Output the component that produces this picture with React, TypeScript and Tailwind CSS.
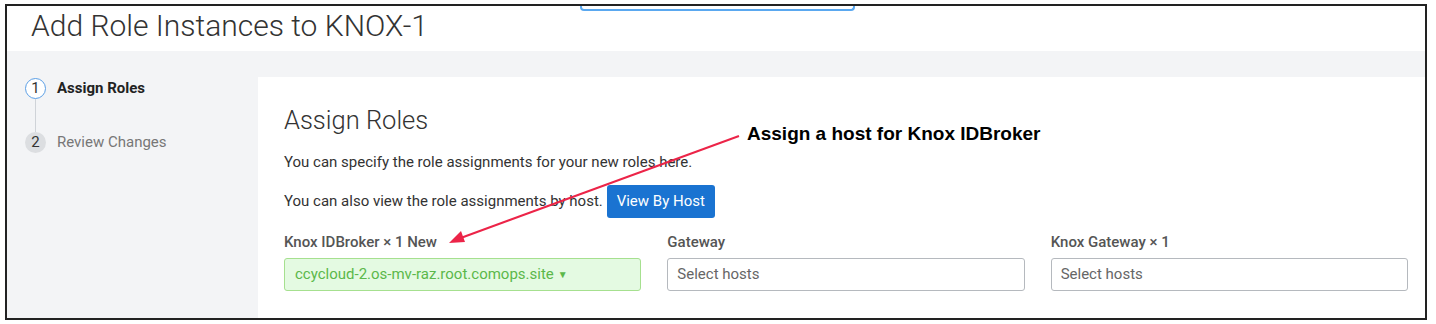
const fieldCols = [
  { label: "Knox IDBroker × 1 New", value: "ccycloud-2.os-mv-raz.root.comops.site", assigned: true },
  { label: "Gateway", value: "Select hosts", assigned: false },
  { label: "Knox Gateway × 1", value: "Select hosts", assigned: false },
];

const Stepper = () => (
  <div className="w-[251px] shrink-0 pl-[18px] pt-[27px]">
    <div className="flex items-center gap-[11px] h-[21px]">
      <div className="w-[21px] h-[21px] rounded-full border-[1.5px] border-[#5b9fe6] bg-white flex items-center justify-center text-[15px] text-[#333]">
        1
      </div>
      <span className="text-[15px] font-bold text-[#222]">Assign Roles</span>
    </div>
    <div className="ml-[10px] w-px h-[33px] bg-[#cfd3d8]" />
    <div className="flex items-center gap-[11px] h-[21px]">
      <div className="w-[21px] h-[21px] rounded-full bg-[#dcdee1] flex items-center justify-center text-[15px] text-[#333]">
        2
      </div>
      <span className="text-[15px] text-[#777]">Review Changes</span>
    </div>
  </div>
);

const HostField = ({ label, value, assigned }: { label: string; value: string; assigned: boolean }) => (
  <div className="flex flex-col">
    <label className="text-[15px] font-medium text-[#555] leading-[20px] mb-[6px]">{label}</label>
    {assigned ? (
      <div className="h-[33px] rounded-[3px] border border-[#a6e08f] bg-[#e4fae2] px-[10px] flex items-center text-[15px] text-[#5bb84a]">
        {value}
        <span className="ml-[4px] text-[10px] leading-none">▼</span>
      </div>
    ) : (
      <div className="h-[33px] rounded-[3px] border border-[#b5b9be] bg-white px-[9px] flex items-center text-[15px] text-[#666]">
        {value}
      </div>
    )}
  </div>
);

export default function App() {
  return (
    <div className="relative w-[1436px] h-[324px] bg-white overflow-hidden font-['Roboto',sans-serif]">
      <div className="absolute left-[5px] top-[4px] w-[1422px] h-[316px] border-2 border-[#222] flex flex-col">
        {/* partial input cut off at the top */}
        <div className="absolute left-[573px] top-0 w-[275px] h-[5px] border-x-2 border-b-2 border-[#5aa8f0] rounded-b-[4px]" />

        <div className="h-[45px] shrink-0 pl-[24px] flex items-center">
          <h1 className="text-[30px] font-light text-[#333] leading-none -mt-[6px]">Add Role Instances to KNOX-1</h1>
        </div>

        <div className="flex-1 flex bg-[#f3f4f6]">
          <Stepper />
          <div className="flex-1 mt-[26px] bg-white pl-[26px] pr-[17px] pt-[28px]">
            <h2 className="text-[25.5px] font-light text-[#333] leading-[30px]">Assign Roles</h2>
            <p className="text-[15px] text-[#333] leading-[20px] mt-[17px]">
              You can specify the role assignments for your new roles here.
            </p>
            <div className="flex items-center gap-[4px] mt-[13px]">
              <span className="text-[15px] text-[#333]">You can also view the role assignments by host.</span>
              <button className="h-[33px] w-[108px] rounded-[3px] bg-[#1a73d1] text-white text-[15px]">View By Host</button>
            </div>
            <div className="grid grid-cols-3 gap-[26px] mt-[14px]">
              {fieldCols.map((f) => (
                <HostField key={f.label} {...f} />
              ))}
            </div>
          </div>
        </div>
      </div>

      {/* annotation */}
      <svg className="absolute left-0 top-0 pointer-events-none" width="1436" height="324">
        <line x1="739" y1="136" x2="458" y2="239" stroke="#ec2448" strokeWidth="2" />
        <polygon points="449,243 461,231 465,242" fill="#ec2448" />
      </svg>
      <div className="absolute left-[747px] top-[120px] text-[19px] font-bold text-black font-['Liberation_Sans',Arial,sans-serif]">
        Assign a host for Knox IDBroker
      </div>
    </div>
  );
}
